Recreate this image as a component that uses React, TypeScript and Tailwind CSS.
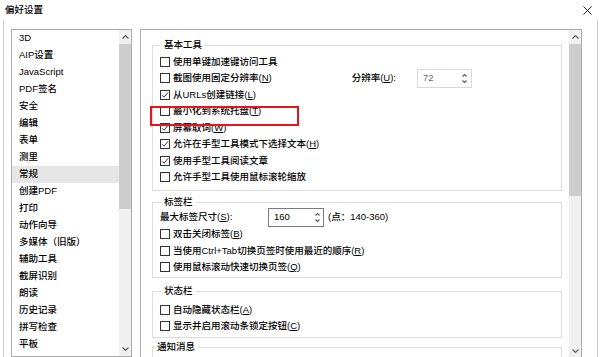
import type { ReactNode } from 'react';

const font = { fontFamily: '"Liberation Sans", "Noto Sans CJK SC", sans-serif' };

const navItems = [
  '3D', 'AIP设置', 'JavaScript', 'PDF签名', '安全', '编辑', '表单', '测里', '常规',
  '创建PDF', '打印', '动作向导', '多媒体（旧版）', '辅助工具', '截屏识别', '朗读',
  '历史记录', '拼写检查', '平板',
];

function K({ children }: { children: ReactNode }) {
  return <span className="underline underline-offset-[1px]">{children}</span>;
}

function Chevron({ up, small }: { up?: boolean; small?: boolean }) {
  const w = small ? 5 : 7;
  const h = small ? 3 : 4;
  return (
    <svg width={w} height={h} viewBox={`0 0 ${w} ${h}`}>
      <path
        d={up ? `M0.5 ${h - 0.5} L${w / 2} 0.5 L${w - 0.5} ${h - 0.5}` : `M0.5 0.5 L${w / 2} ${h - 0.5} L${w - 0.5} 0.5`}
        fill="none"
        stroke="#5a5a5a"
        strokeWidth="1.1"
      />
    </svg>
  );
}

function Box({ checked }: { checked?: boolean }) {
  return (
    <span className="w-[10px] h-[10px] border border-[#333333] bg-white flex items-center justify-center shrink-0">
      {checked && (
        <svg width="8" height="8" viewBox="0 0 8 8">
          <path d="M1 4.2 L3 6.2 L7 1.4" fill="none" stroke="#333333" strokeWidth="1" />
        </svg>
      )}
    </span>
  );
}

function CheckRow({ checked, children, extra }: { checked?: boolean; children: ReactNode; extra?: ReactNode }) {
  return (
    <div className="h-[16.5px] flex items-center">
      <Box checked={checked} />
      <span className="ml-[3px] whitespace-nowrap">{children}</span>
      {extra}
    </div>
  );
}

function Spinner() {
  return (
    <span className="flex flex-col items-center gap-[3px]">
      <Chevron up small />
      <Chevron small />
    </span>
  );
}

function Group({ title, className, children }: { title: string; className?: string; children?: ReactNode }) {
  return (
    <fieldset className={`w-[410px] border border-[#dcdcdc] ${className ?? ''}`}>
      <legend className="ml-[1px] px-[3px] leading-[12px]">{title}</legend>
      {children}
    </fieldset>
  );
}

function Scrollbar({ thumb }: { thumb: number }) {
  return (
    <div className="w-[12px] bg-[#f0f0f0] flex flex-col">
      <div className="h-[14px] flex items-center justify-center">
        <Chevron up />
      </div>
      <div className="bg-[#cdcdcd]" style={{ height: thumb }} />
      <div className="flex-1" />
      <div className="h-[14px] flex items-center justify-center">
        <Chevron />
      </div>
    </div>
  );
}

export default function App() {
  return (
    <div className="relative w-[600px] h-[357px] overflow-hidden bg-white flex flex-col text-[9.5px] font-medium text-black" style={font}>
      <div className="h-[20px] shrink-0 flex items-center justify-between pl-[5px] pr-[8px]">
        <span>偏好设置</span>
        <svg width="9" height="9" viewBox="0 0 9 9">
          <path d="M0.5 0.5 L8.5 8.5 M8.5 0.5 L0.5 8.5" stroke="#222" strokeWidth="1" />
        </svg>
      </div>

      <div className="flex-1 min-h-0 ml-[3px] mr-[2px] border-x border-[#cacaca] flex items-start pl-[7px] pt-[9px] gap-[8px]">
        {/* category list */}
        <div className="w-[121px] h-[328px] shrink-0 border border-[#ababab] flex">
          <div className="flex-1 flex flex-col">
            {navItems.map((item, i) => (
              <div key={item} className={`h-[17px] shrink-0 flex items-center pl-[7px] ${i === 8 ? 'bg-[#e6e6e6]' : ''}`}>
                {item}
              </div>
            ))}
          </div>
          <Scrollbar thumb={165} />
        </div>

        {/* settings panel */}
        <div className="w-[442px] h-[330px] shrink-0 border border-[#ababab] flex">
          <div className="flex-1 flex flex-col pl-[11px] pt-[9px]">
            <Group title="基本工具" className="pt-[2.5px] pb-[4.5px] pl-[7px]">
              <CheckRow>使用单键加速键访问工具</CheckRow>
              <CheckRow
                extra={
                  <div className="ml-auto mr-[89px] flex items-center gap-[21px]">
                    <span>分辨率(<K>U</K>):</span>
                    <span className="w-[55px] h-[19px] border border-[#d9d9d9] text-[#6d6d6d] flex items-center justify-between pl-[5px] pr-[4px]">
                      72
                      <Spinner />
                    </span>
                  </div>
                }
              >
                截图使用固定分辨率(<K>N</K>)
              </CheckRow>
              <CheckRow checked>从URLs创建链接(<K>L</K>)</CheckRow>
              <CheckRow>最小化到系统托盘(<K>T</K>)</CheckRow>
              <CheckRow checked>屏幕取词(<K>W</K>)</CheckRow>
              <CheckRow checked>允许在手型工具模式下选择文本(<K>H</K>)</CheckRow>
              <CheckRow checked>使用手型工具阅读文章</CheckRow>
              <CheckRow>允许手型工具使用鼠标滚轮缩放</CheckRow>
            </Group>

            <Group title="标签栏" className="mt-[5px] pb-[1.5px] pl-[7px]">
              <div className="h-[18px] flex items-center">
                <span className="w-[108px] whitespace-nowrap">最大标签尺寸(<K>S</K>):</span>
                <span className="w-[56px] h-[19px] border border-[#7a7a7a] flex items-center justify-between pl-[5px] pr-[3px]">
                  160
                  <Spinner />
                </span>
                <span className="ml-[4px]">(点：140-360)</span>
              </div>
              <CheckRow>双击关闭标签(<K>B</K>)</CheckRow>
              <CheckRow>当使用Ctrl+Tab切换页签时使用最近的顺序(<K>R</K>)</CheckRow>
              <CheckRow>使用鼠标滚动快速切换页签(<K>Q</K>)</CheckRow>
            </Group>

            <Group title="状态栏" className="mt-[7px] pt-[4.5px] pb-[2px] pl-[7px]">
              <CheckRow>自动隐藏状态栏(<K>A</K>)</CheckRow>
              <CheckRow>显示并启用滚动条锁定按钮(<K>C</K>)</CheckRow>
            </Group>

            <Group title="通知消息" className="mt-[3.5px] h-[40px]" />
          </div>
          <div className="w-[7px]" />
          <Scrollbar thumb={152} />
        </div>
      </div>

      {/* highlight */}
      <div className="absolute left-[150px] top-[106px] w-[149px] h-[20px] border-2 border-[#e8141c]" />
    </div>
  );
}
